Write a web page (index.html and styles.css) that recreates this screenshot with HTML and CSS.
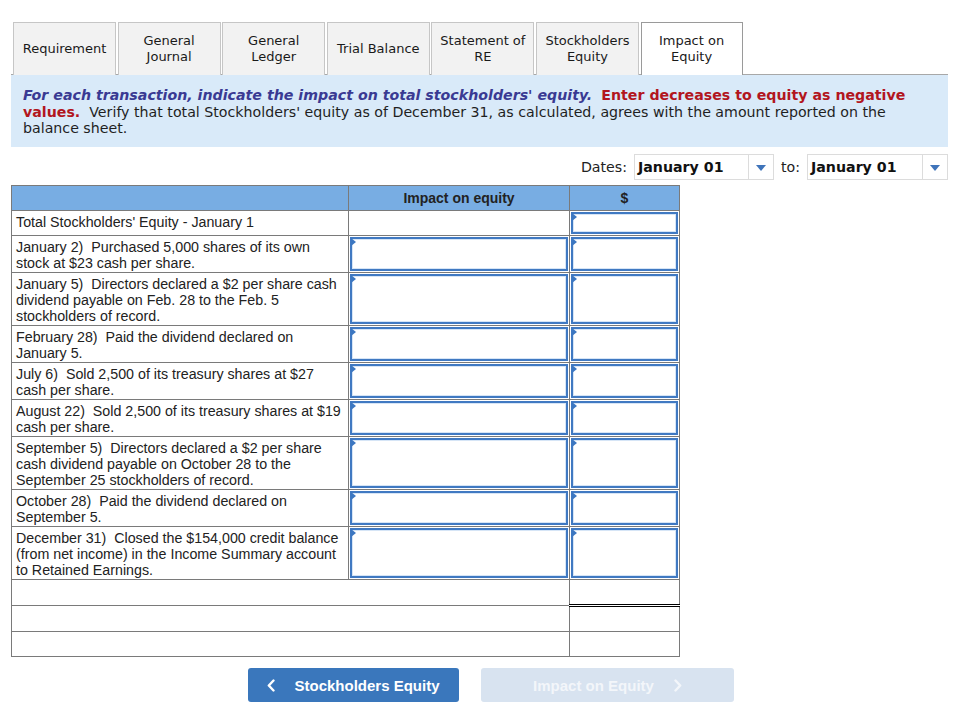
FILE: index.html
```html
<!DOCTYPE html>
<html>
<head>
<meta charset="utf-8">
<link rel="stylesheet" href="styles.css">
</head>
<body>
<div class="page">
  <div class="tabs">
    <div class="tab">Requirement</div>
    <div class="tab">General<br>Journal</div>
    <div class="tab">General<br>Ledger</div>
    <div class="tab">Trial Balance</div>
    <div class="tab">Statement of<br>RE</div>
    <div class="tab">Stockholders<br>Equity</div>
    <div class="tab active">Impact on<br>Equity</div>
  </div>
  <div class="info">
    <span class="em">For each transaction, indicate the impact on total stockholders' equity.</span>&nbsp; <span class="warn">Enter decreases to equity as negative values.</span>&nbsp; Verify that total Stockholders' equity as of December 31, as calculated, agrees with the amount reported on the balance sheet.
  </div>
  <div class="dates">
    <span class="lbl">Dates:</span>
    <div class="sel sel1"><span class="val">January 01</span><span class="arr"><span class="tri"></span></span></div>
    <span class="lbl to">to:</span>
    <div class="sel sel2"><span class="val">January 01</span><span class="arr"><span class="tri"></span></span></div>
  </div>
  <table class="grid">
    <colgroup><col class="c1"><col class="c2"><col class="c3"></colgroup>
    <thead>
      <tr><th></th><th>Impact on equity</th><th>$</th></tr>
    </thead>
    <tbody>
      <tr class="one"><td class="desc">Total Stockholders' Equity - January 1</td><td></td><td class="in"></td></tr>
      <tr><td class="desc">January 2)&nbsp; Purchased 5,000 shares of its own stock at $23 cash per share.</td><td class="in"></td><td class="in"></td></tr>
      <tr><td class="desc">January 5)&nbsp; Directors declared a $2 per share cash dividend payable on Feb. 28 to the Feb. 5 stockholders of record.</td><td class="in"></td><td class="in"></td></tr>
      <tr><td class="desc">February 28)&nbsp; Paid the dividend declared on January 5.</td><td class="in"></td><td class="in"></td></tr>
      <tr><td class="desc">July 6)&nbsp; Sold 2,500 of its treasury shares at $27 cash per share.</td><td class="in"></td><td class="in"></td></tr>
      <tr><td class="desc">August 22)&nbsp; Sold 2,500 of its treasury shares at $19 cash per share.</td><td class="in"></td><td class="in"></td></tr>
      <tr><td class="desc">September 5)&nbsp; Directors declared a $2 per share cash dividend payable on October 28 to the September 25 stockholders of record.</td><td class="in"></td><td class="in"></td></tr>
      <tr><td class="desc">October 28)&nbsp; Paid the dividend declared on September 5.</td><td class="in"></td><td class="in"></td></tr>
      <tr><td class="desc">December 31)&nbsp; Closed the $154,000 credit balance (from net income) in the Income Summary account to Retained Earnings.</td><td class="in"></td><td class="in"></td></tr>
      <tr class="one"><td colspan="2"></td><td class="total"></td></tr>
      <tr class="one"><td colspan="2"></td><td></td></tr>
      <tr class="one"><td colspan="2"></td><td></td></tr>
    </tbody>
  </table>
  <div class="nav">
    <button class="btn prev"><svg class="chev" width="8" height="13" viewBox="0 0 8 13"><polyline points="6.5,1.5 1.8,6.5 6.5,11.5" fill="none" stroke="#fff" stroke-width="2.4" stroke-linecap="round" stroke-linejoin="round"/></svg>Stockholders Equity</button>
    <button class="btn next" disabled>Impact on Equity<svg class="chev r" width="8" height="13" viewBox="0 0 8 13"><polyline points="1.5,1.5 6.2,6.5 1.5,11.5" fill="none" stroke="#f3f6fa" stroke-width="2.4" stroke-linecap="round" stroke-linejoin="round"/></svg></button>
  </div>
</div>
</body>
</html>
```
FILE: styles.css
```css
html, body { margin: 0; padding: 0; background: #fff; }
body { font-family: "DejaVu Sans", Verdana, sans-serif; color: #222; }
.page { padding: 22px 7px 0 11px; width: 937px; }

.tabs { display: flex; gap: 1.6px; padding-left: 2px; height: 52px; border-bottom: 1px solid #a8a8a8; }
.tab { box-sizing: border-box; width: 103px; height: 53px; border: 1px solid #c6c6c6; border-bottom: none; background: #f2f2f2; display: flex; align-items: center; justify-content: center; text-align: center; font-size: 13px; line-height: 16px; color: #1a1a1a; }
.tab.active { background: #fff; border-color: #9a9a9a; position: relative; z-index: 1; width: 102px; }

.info { background: #d9eaf9; padding: 12px 12px 8px 12px; font-size: 14.2px; line-height: 16.6px; color: #1f1f1f; height: 52px; }
.em { font-weight: bold; font-style: italic; color: #3a3a93; }
.warn { font-weight: bold; color: #b2161e; }

.dates { display: flex; justify-content: flex-end; align-items: center; margin-top: 7px; height: 26px; }
.lbl { font-size: 14.2px; color: #222; margin-right: 7px; }
.lbl.to { margin-left: 7px; }
.sel { box-sizing: border-box; height: 26px; border: 1px solid #dcdcdc; display: flex; align-items: stretch; background: #fff; }
.sel1 { width: 140px; }
.sel2 { width: 141px; }
.val { flex: 1; font-weight: bold; font-size: 14.2px; display: flex; align-items: center; padding-left: 3px; color: #111; }
.arr { width: 24px; border-left: 1px solid #dcdcdc; display: flex; align-items: center; justify-content: center; }
.tri { width: 0; height: 0; border-left: 5px solid transparent; border-right: 5px solid transparent; border-top: 6px solid #3f74ba; margin-top: 1px; }

.grid { border-collapse: collapse; margin-top: 5px; font-family: "Liberation Sans", Arial, sans-serif; font-size: 14.25px; table-layout: fixed; width: 668px; }
.c1 { width: 337px; }
.c2 { width: 221px; }
.c3 { width: 110px; }
.grid th { background: #78ade3; border: 1px solid #7a7a7a; height: 24px; padding: 0; font-size: 14px; font-weight: bold; color: #222; }
.grid td { border: 1px solid #7a7a7a; padding: 3px 4px 1px 4px; line-height: 16px; vertical-align: top; color: #222; }
.grid tr.one td { height: 20px; }
.grid td.in { position: relative; box-shadow: inset 0 0 0 1px #fff, inset 0 0 0 3px #4079c2, inset 0 0 0 4px #d6e5f6; }
.grid td.in::before { content: ""; position: absolute; left: 2px; top: 2px; width: 0; height: 0; border-top: 4px solid transparent; border-bottom: 4px solid transparent; border-left: 5px solid #3c77c1; }
.grid td.total { border-top: 1px solid #000; border-bottom: 3px double #000; }

.nav { display: flex; gap: 22px; margin-top: 11px; padding-left: 237px; }
.btn { box-sizing: border-box; height: 34px; border: none; border-radius: 3px; font-family: "Liberation Sans", Arial, sans-serif; font-weight: bold; font-size: 15px; color: #fff; display: flex; align-items: center; justify-content: center; padding: 0; }
.prev { width: 211px; background: #3a77bc; }
.next { width: 253px; background: #d8e3f0; color: #f3f6fa; }
.chev { margin-right: 19px; display: block; }
.chev.r { margin-right: 0; margin-left: 20px; }
```
